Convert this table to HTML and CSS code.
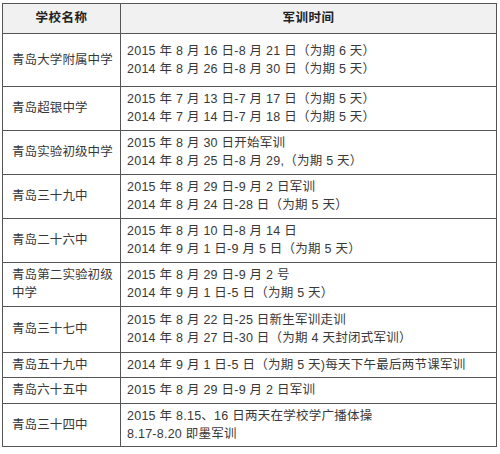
FILE: index.html
```html
<!DOCTYPE html>
<html lang="zh-CN">
<head>
<meta charset="utf-8">
<title>青岛中学军训时间</title>
<link rel="stylesheet" href="styles.css">
</head>
<body>
<table class="schedule">
  <colgroup><col class="col-school"><col class="col-time"></colgroup>
  <thead>
    <tr><th>学校名称</th><th>军训时间</th></tr>
  </thead>
  <tbody>
    <tr class="first">
      <td class="school">青岛大学附属中学</td>
      <td class="time">2015 年 8 月 16 日-8 月 21 日（为期 6 天）<br>2014 年 8 月 26 日-8 月 30 日（为期 5 天）</td>
    </tr>
    <tr>
      <td class="school">青岛超银中学</td>
      <td class="time">2015 年 7 月 13 日-7 月 17 日（为期 5 天）<br>2014 年 7 月 14 日-7 月 18 日（为期 5 天）</td>
    </tr>
    <tr>
      <td class="school">青岛实验初级中学</td>
      <td class="time">2015 年 8 月 30 日开始军训<br>2014 年 8 月 25 日-8 月 29,（为期 5 天）</td>
    </tr>
    <tr>
      <td class="school">青岛三十九中</td>
      <td class="time">2015 年 8 月 29 日-9 月 2 日军训<br>2014 年 8 月 24 日-28 日（为期 5 天）</td>
    </tr>
    <tr>
      <td class="school">青岛二十六中</td>
      <td class="time">2015 年 8 月 10 日-8 月 14 日<br>2014 年 9 月 1 日-9 月 5 日（为期 5 天）</td>
    </tr>
    <tr>
      <td class="school">青岛第二实验初级<br>中学</td>
      <td class="time">2015 年 8 月 29 日-9 月 2 号<br>2014 年 9 月 1 日-5 日（为期 5 天）</td>
    </tr>
    <tr class="tall">
      <td class="school">青岛三十七中</td>
      <td class="time">2015 年 8 月 22 日-25 日新生军训走训<br>2014 年 8 月 27 日-30 日（为期 4 天封闭式军训）</td>
    </tr>
    <tr>
      <td class="school">青岛五十九中</td>
      <td class="time">2014 年 9 月 1 日-5 日（为期 5 天)每天下午最后两节课军训</td>
    </tr>
    <tr>
      <td class="school">青岛六十五中</td>
      <td class="time">2015 年 8 月 29 日-9 月 2 日军训</td>
    </tr>
    <tr class="last">
      <td class="school">青岛三十四中</td>
      <td class="time">2015 年 8.15、16 日两天在学校学广播体操<br>8.17-8.20 即墨军训</td>
    </tr>
  </tbody>
</table>
</body>
</html>
```
FILE: styles.css
```css
html, body {
  margin: 0;
  background: #ffffff;
}
body {
  padding: 3px 0 0 2px;
  font-family: "Liberation Sans", "Noto Sans CJK SC", sans-serif;
  font-size: 12.5px;
  color: #383838;
}
.schedule {
  border-collapse: collapse;
  width: 494px;
  table-layout: fixed;
  border: 1px solid #444444;
}
.col-school { width: 118px; }
.col-time { width: 376px; }
.schedule th, .schedule td {
  border: 1px solid #555555;
  line-height: 18.5px;
  padding: 3px 6px;
  vertical-align: middle;
  text-align: left;
}
.schedule th {
  background: #f1f1f1;
  font-weight: bold;
  color: #222222;
  text-align: center;
  padding: 5px 6px;
  font-size: 12.5px;
  letter-spacing: 0.5px;
}
.schedule td.school {
  padding-left: 9px;
  letter-spacing: 0.1px;
  white-space: nowrap;
}
.schedule td.time {
  letter-spacing: 0.25px;
}
.schedule tr.first td {
  padding-top: 8px;
  padding-bottom: 7px;
}
.schedule tr.tall td {
  padding-top: 4px;
  padding-bottom: 4px;
}
.schedule tr.last td {
  padding-bottom: 2px;
}
```
